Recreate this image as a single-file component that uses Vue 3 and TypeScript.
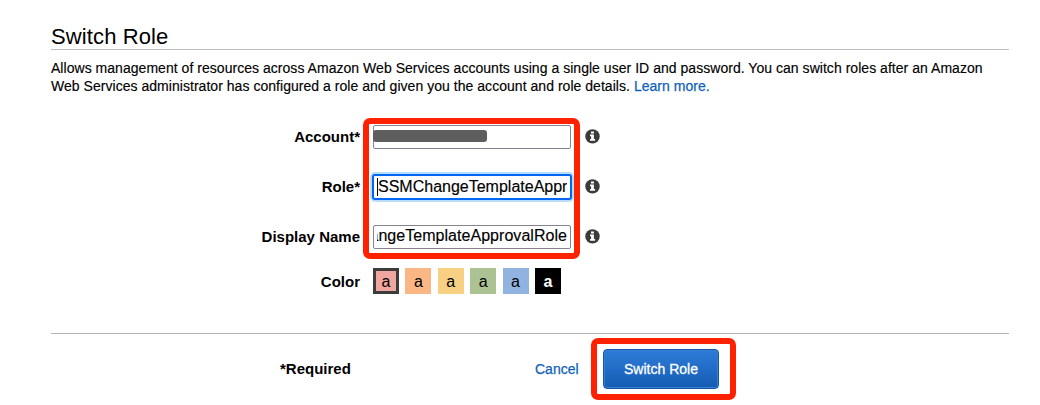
<script setup lang="ts">
import { ref } from 'vue'

interface Swatch {
  name: string
  selected?: boolean
}

interface Field {
  id: string
  label: string
  value: string
}

const fields = ref<Field[]>([
  { id: 'account', label: 'Account*', value: '' },
  { id: 'role', label: 'Role*', value: 'SSMChangeTemplateAppr' },
  { id: 'display', label: 'Display Name', value: 'angeTemplateApprovalRole' },
])

const swatches: Swatch[] = [
  { name: 'red', selected: true },
  { name: 'orange' },
  { name: 'yellow' },
  { name: 'green' },
  { name: 'blue' },
  { name: 'black' },
]
</script>

<template>
  <main class="page">
    <h1 class="title">Switch Role</h1>
    <p class="intro">
      Allows management of resources across Amazon Web Services accounts using a single user ID and password. You can switch roles after an Amazon<br />
      Web Services administrator has configured a role and given you the account and role details. <a class="link">Learn more.</a>
    </p>

    <form class="form" @submit.prevent>
      <div v-for="f in fields" :key="f.id" class="row" :class="f.id">
        <label class="label">{{ f.label }}</label>
        <div class="input">
          <span v-if="f.id === 'account'" class="redacted"></span>
          <span v-else class="value">{{ f.value }}</span>
        </div>
        <svg class="info" viewBox="0 0 15 15" aria-hidden="true">
          <circle cx="7.5" cy="7.4" r="7.2" fill="#3b3b3b" />
          <path d="M6 2.4h2.9v2.1H6zM5 5.6h3.9v4.5h1.2v1.7H5v-1.7h1.1V7.3H5z" fill="#fff" />
        </svg>
      </div>
      <div class="row colors">
        <label class="label">Color</label>
        <div class="swatches">
          <span v-for="s in swatches" :key="s.name" class="swatch" :class="[s.name, { selected: s.selected }]">a</span>
        </div>
      </div>
      <div class="highlight fields-mark"></div>
    </form>

    <footer class="footer">
      <span class="required">*Required</span>
      <a class="link cancel">Cancel</a>
      <div class="submit-wrap">
        <button class="submit" type="button">Switch Role</button>
        <div class="highlight button-mark"></div>
      </div>
    </footer>
  </main>
</template>

<style>
body {
  background: #fff;
}
</style>

<style scoped>
.page {
  box-sizing: border-box;
  width: 1040px;
  height: 405px;
  padding: 24px 31px 0 51px;
  overflow: hidden;
  color: #000;
  font-family: "Liberation Sans", Arial, Helvetica, sans-serif;
  font-size: 14px;
}
.title {
  box-sizing: border-box;
  height: 26px;
  margin: 0;
  border-bottom: 1px solid #bdbdbd;
  font-size: 22px;
  font-weight: 400;
  line-height: 25px;
  letter-spacing: 0.12px;
}
.intro {
  height: 36px;
  margin: 9px 0 0;
  line-height: 18px;
  letter-spacing: 0.036px;
  white-space: nowrap;
  -webkit-text-stroke: 0.15px #000;
}
.link {
  color: #0f5fb8;
  -webkit-text-stroke: 0.25px #0f5fb8;
}
.form {
  position: relative;
  display: flex;
  flex-direction: column;
  height: 239px;
  padding-top: 30px;
  box-sizing: border-box;
  border-bottom: 1px solid #b4b4b4;
}
.row {
  display: flex;
  flex: none;
  height: 24px;
  margin-bottom: 26px;
}
.label {
  width: 309px;
  margin-right: 13px;
  font-size: 15px;
  font-weight: 700;
  line-height: 24px;
  text-align: right;
}
.input {
  box-sizing: border-box;
  display: flex;
  align-items: center;
  width: 198px;
  height: 24px;
  border: 1px solid #858391;
  border-radius: 2px;
  background: #fff;
  font-size: 16px;
  line-height: 22px;
}
.value {
  display: flex;
  justify-content: flex-end;
  width: 190px;
  margin-left: 3px;
  overflow: hidden;
  white-space: nowrap;
  -webkit-text-stroke: 0.15px #000;
}
.display .value {
  height: 22px;
  line-height: 20px;
  letter-spacing: 0.04px;
}
.role .input {
  border-color: #0067f4;
  box-shadow: 0 0 0 1px #0067f4, 0 0 0 3px #b9dcfb;
}
.role .value {
  box-sizing: border-box;
  justify-content: flex-start;
  height: 18px;
  border-left: 1px solid #000;
  line-height: 18px;
}
.redacted {
  width: 114px;
  height: 12px;
  margin: -2px 0 0 -1px;
  border-radius: 3px;
  background: #5e5e5e;
}
.info {
  width: 15px;
  height: 15px;
  margin: 4px 0 0 14px;
}
.colors {
  height: 26px;
  margin: -7px 0 0;
}
.colors .label {
  line-height: 27px;
}
.swatches {
  display: flex;
  gap: 6.4px;
}
.swatch {
  box-sizing: border-box;
  width: 26px;
  height: 26px;
  font-size: 16px;
  line-height: 27px;
  text-align: center;
}
.selected {
  border: 3px solid #3c3c3c;
  line-height: 21px;
}
.red { background: #f0a59f; }
.orange { background: #fab685; }
.yellow { background: #f8d083; }
.green { background: #adc293; }
.blue { background: #91b3e0; }
.black {
  background: #000;
  color: #fff;
  font-weight: 700;
}
.highlight {
  position: absolute;
  box-sizing: border-box;
  border: 6px solid #ff2200;
  border-radius: 7px;
  pointer-events: none;
}
.fields-mark {
  left: 312px;
  top: 23px;
  width: 217px;
  height: 141px;
}
.footer {
  display: flex;
  height: 70px;
}
.required {
  width: 255px;
  padding-left: 229px;
  font-size: 15px;
  font-weight: 700;
  line-height: 70px;
}
.cancel {
  width: 68px;
  line-height: 70px;
}
.submit-wrap {
  position: relative;
  width: 116px;
  height: 40px;
  margin-top: 15px;
}
.submit {
  display: block;
  width: 116px;
  height: 40px;
  padding: 0;
  border: 1px solid #1256a8;
  border-radius: 4px;
  background: linear-gradient(#2d7cd9, #155cb3);
  box-shadow: inset 0 0 0 1px #3a7fce;
  color: #fff;
  font-family: inherit;
  font-size: 14px;
  -webkit-text-stroke: 0.3px #fff;
}
.button-mark {
  left: -12px;
  top: -11px;
  width: 145px;
  height: 62px;
}
</style>
